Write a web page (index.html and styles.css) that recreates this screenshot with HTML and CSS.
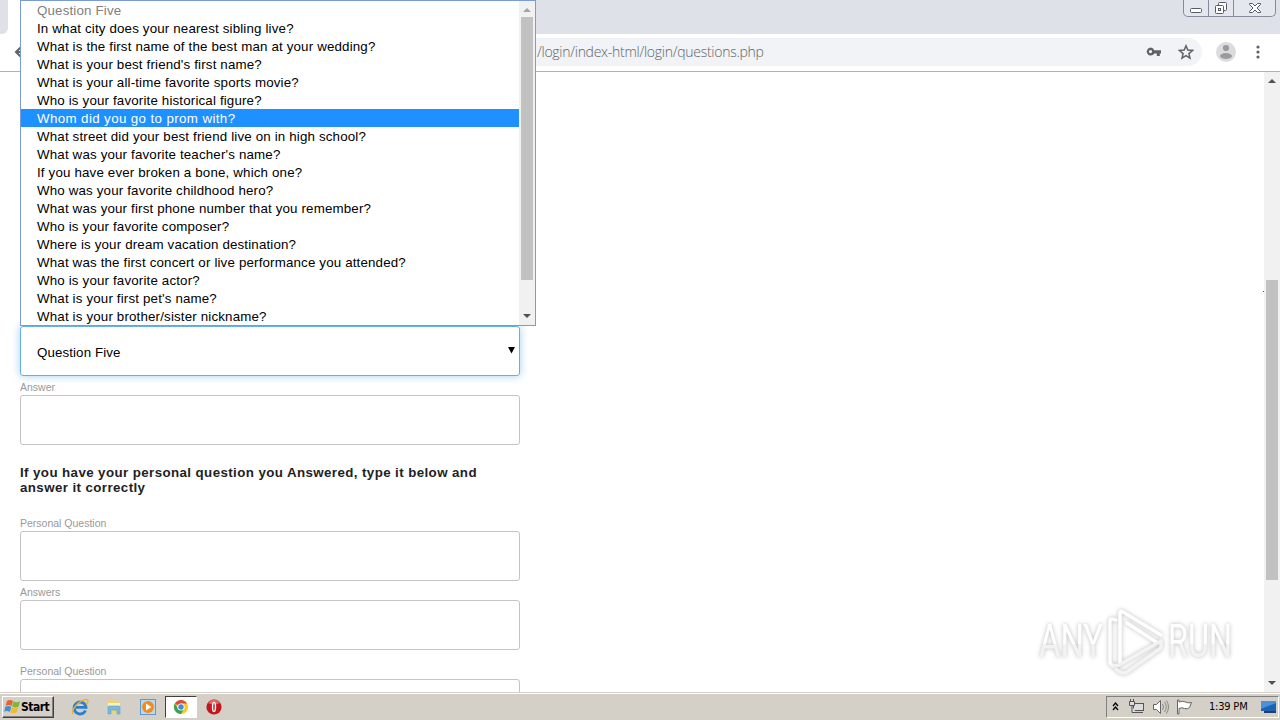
FILE: index.html
```html
<!DOCTYPE html>
<html lang="en">
<head>
    <meta charset="utf-8">
    <title>Security Questions</title>
    <link rel="stylesheet" href="styles.css">
</head>
<body>
    <!-- Browser window -->
    <div class="tabstrip">
        <div class="tab-edge"></div>
        <div class="active-tab"></div>
        <div class="window-buttons">
            <span class="win-btn min"><svg width="14" height="14" viewBox="0 0 14 14"><rect x="1.500" y="7.500" width="11" height="4" rx="1" fill="#fff" stroke="#555b68"/></svg></span>
            <span class="win-btn max"><svg width="14" height="14" viewBox="0 0 14 14" fill="#fff" stroke="#555b68"><rect x="4.500" y="1.500" width="8" height="8" rx="1"/><rect x="1.500" y="4.500" width="8" height="8" rx="1"/><rect x="4.500" y="7.500" width="2" height="2"/></svg></span>
            <span class="win-btn close"><svg width="14" height="14" viewBox="0 0 14 14"><path d="M1.500 2.500h3L7 5l2.500-2.500h3v1L9 7l3.500 3.500v1h-3L7 9l-2.500 2.500h-3v-1L5 7 1.500 3.500z" fill="#fff" stroke="#555b68"/></svg></span>
        </div>
    </div>
    <div class="toolbar">
        <svg class="back" width="16" height="16" viewBox="0 0 16 16" fill="none" stroke="#5f6368" stroke-width="2"><path d="M15 8H2M8 2L2 8l6 6"/></svg>
        <div class="address">
            <span class="url">/login/index-html/login/questions.php</span>
            <svg class="key" width="16" height="10" viewBox="0 0 16 10"><path fill="#5f6368" fill-rule="evenodd" d="M4.500.500a4 4 0 0 1 3.800 2.700H15v3.200h-1.200V9h-3V6.400H8.300A4 4 0 1 1 4.500.500zm0 2.500a1.600 1.600 0 1 0 0 3.200 1.600 1.600 0 0 0 0-3.200z"/></svg>
            <svg class="star" width="16" height="16" viewBox="0 0 16 16"><path d="M8 1.800l1.800 4.300 4.700.4-3.600 3.100 1.100 4.500L8 11.700l-4 2.400 1.100-4.500-3.600-3.100 4.700-.4z" fill="none" stroke="#5f6368" stroke-width="1.500"/></svg>
        </div>
        <svg class="avatar" width="20" height="20" viewBox="0 0 20 20"><circle cx="10" cy="10" r="10" fill="#dcdcde"/><circle cx="10" cy="6" r="3.100" fill="#9b9b9d"/><ellipse cx="10" cy="14" rx="6" ry="3" fill="#9b9b9d"/></svg>
        <svg class="dots" width="4" height="14" viewBox="0 0 4 14" fill="#5f6368"><circle cx="2" cy="2" r="1.600"/><circle cx="2" cy="7" r="1.600"/><circle cx="2" cy="12" r="1.600"/></svg>
    </div>

    <div class="viewport">
        <form class="questions">
            <div class="select-box">
                <span>Question Five</span>
                <svg width="8" height="7" viewBox="0 0 8 7"><path d="M1 0h7L4.500 6.500z"/></svg>
            </div>
            <label for="answer5">Answer</label>
            <input type="text" id="answer5">
            <h4>If you have your personal question you Answered, type it below and answer it correctly</h4>
            <label for="personal1">Personal Question</label>
            <input type="text" id="personal1">
            <label for="answer6">Answers</label>
            <input type="text" id="answer6">
            <label for="personal2" class="next">Personal Question</label>
            <input type="text" id="personal2">
        </form>
        <div class="speck"></div>
        <svg class="watermark" width="220" height="76" viewBox="0 0 220 76">
            <defs>
                <linearGradient id="fade" x1="0" y1="0" x2="0" y2="1">
                    <stop offset="55%" stop-color="#fff"/>
                    <stop offset="56%" stop-color="#f3f3f3"/>
                </linearGradient>
            </defs>
            <text x="9" y="53" textLength="64" lengthAdjust="spacingAndGlyphs">ANY</text>
            <text x="138" y="53" textLength="64" lengthAdjust="spacingAndGlyphs">RUN</text>
            <g fill="none" stroke-width="3.500" stroke-linecap="round" stroke-linejoin="round">
                <path d="M86 16l-4-1q-2 0-2 2v42l3 3" stroke="#fdfdfd"/>
                <path d="M90 59V9q0-3 3-1l38 23" stroke="#fff"/>
                <path d="M97 19l29 19" stroke="#fff"/>
                <path d="M83 62l6-1 42-24" stroke="#f3f3f3"/>
                <path d="M86 65q6 6 11 3l34-24V37" stroke="#f3f3f3"/>
            </g>
        </svg>
        <div class="scrollbar">
            <svg width="8" height="4" viewBox="0 0 8 4"><path d="M0 4l4-4 4 4z" fill="#505050"/></svg>
            <div class="thumb"></div>
            <svg width="8" height="4" viewBox="0 0 8 4"><path d="M0 0h8L4 4z" fill="#505050"/></svg>
        </div>
    </div>

    <!-- Open question list -->
    <div class="dropdown">
        <ul>
            <li class="disabled">Question Five</li>
            <li>In what city does your nearest sibling live?</li>
            <li>What is the first name of the best man at your wedding?</li>
            <li>What is your best friend's first name?</li>
            <li>What is your all-time favorite sports movie?</li>
            <li>Who is your favorite historical figure?</li>
            <li class="selected">Whom did you go to prom with?</li>
            <li>What street did your best friend live on in high school?</li>
            <li>What was your favorite teacher's name?</li>
            <li>If you have ever broken a bone, which one?</li>
            <li>Who was your favorite childhood hero?</li>
            <li>What was your first phone number that you remember?</li>
            <li>Who is your favorite composer?</li>
            <li>Where is your dream vacation destination?</li>
            <li>What was the first concert or live performance you attended?</li>
            <li>Who is your favorite actor?</li>
            <li>What is your first pet's name?</li>
            <li>What is your brother/sister nickname?</li>
        </ul>
        <div class="list-scroll">
            <svg width="8" height="4" viewBox="0 0 8 4"><path d="M0 4l4-4 4 4z" fill="#a3a3a3"/></svg>
            <div class="thumb"></div>
            <svg width="8" height="4" viewBox="0 0 8 4"><path d="M0 0h8L4 4z" fill="#505050"/></svg>
        </div>
    </div>

    <!-- Taskbar -->
    <div class="taskbar">
        <div class="start">
            <svg width="17" height="16" viewBox="0 0 17 16">
                <path d="M3 2q3-2 6 0L7.500 7q-3-2-6 0z" fill="#e8622c"/>
                <path d="M9.500 2.300q3 2 6.500 0L14.700 7.500q-3 2-6.500 0z" fill="#7db83a"/>
                <path d="M1.200 8q3-2 6 0l-1.500 5q-3-2-5.500 0z" fill="#3f8fd6"/>
                <path d="M7.800 8.300q3 2 6.500 0l-1.500 5q-3 2-6.500 0z" fill="#f4b92c"/>
            </svg>
            <span>Start</span>
        </div>
        <div class="app"><svg width="18" height="18" viewBox="0 0 18 18"><path d="M14.500 12.500A6 6 0 1 1 15 9.300H4.500" fill="none" stroke="#2b7fd0" stroke-width="2.800"/><path d="M2 16C-1 12 9 2 15 1.500c3 0 2 3 .5 5" fill="none" stroke="#e9b52f" stroke-width="1.400"/></svg></div>
        <div class="app"><svg width="18" height="18" viewBox="0 0 18 18"><path d="M2 4l1-2h5l1 2h6v11H2z" fill="#efd373"/><path d="M3 5h12v4H3z" fill="#fbf0b8"/><path d="M3 16V9q0-1 1-1h10q1 0 1 1v7h-3v-4H6v4z" fill="#78b9df" stroke="#5f9fca" stroke-width=".6"/></svg></div>
        <div class="app"><svg width="18" height="18" viewBox="0 0 18 18"><rect x="1.500" y="1.500" width="15" height="15" fill="#b9d9f2" stroke="#5b9bd0"/><circle cx="9" cy="9" r="6" fill="#f38b1e"/><path d="M7 5.500v7L12.500 9z" fill="#fff"/></svg></div>
        <div class="app active"><svg width="16" height="16" viewBox="0 0 16 16"><circle cx="8" cy="8" r="7" fill="#f9c926"/><path d="M8 8L1.900 4.500A7 7 0 0 1 14 4.500H8z" fill="#dd4b3a"/><path d="M1.900 4.500A7 7 0 0 0 8 15l3-5.300-6 0z" fill="#35a454"/><circle cx="8" cy="8" r="3.600" fill="#fff"/><circle cx="8" cy="8" r="2.700" fill="#4687e8"/></svg></div>
        <div class="app"><svg width="18" height="18" viewBox="0 0 18 18"><circle cx="9" cy="9" r="7.600" fill="#c4161c"/><path d="M3 5a7 7 0 0 1 12 0q-6 3-12 0z" fill="#dd6663"/><ellipse cx="9" cy="9" rx="2.200" ry="5.200" fill="#fff"/><ellipse cx="9" cy="9" rx=".7" ry="4" fill="#b51218"/></svg></div>
        <div class="tray">
            <svg width="7" height="9" viewBox="0 0 7 9" fill="none" stroke="#000" stroke-width="1.300"><path d="M1 4l2.500-3L6 4M1 8l2.500-3L6 8"/></svg>
            <svg width="17" height="16" viewBox="0 0 17 16" fill="#ddd" stroke="#555"><rect x="5.500" y="4.500" width="10" height="7"/><path d="M6 13.500h9M1.500 2.500h5v4h-5zM2.500 0v2M5.500 0v2M4 7v6.500h4"/></svg>
            <svg width="17" height="16" viewBox="0 0 17 16" fill="none" stroke="#888"><path d="M1.500 5.500h3l4-4v13l-4-4h-3z" fill="#fff" stroke="#666"/><path d="M10.500 5q2 3 0 6M12.500 3q3.500 5 0 10M14.500 1.500q4 6.500 0 13"/></svg>
            <svg width="17" height="16" viewBox="0 0 17 16" fill="#fff" stroke="#666"><path d="M1.500 1v14h1.500V9.500q3-1.500 5.500 0 3 1 5-1l2-5q-3 1-6-.5-3-1.500-6.500 0V1z"/></svg>
            <span class="clock">1:39 PM</span>
            <svg class="desktop" width="16" height="14" viewBox="0 0 16 14"><path d="M0 1h15v10H0z" fill="#1d62b5"/><path d="M0 1h15v2L0 9z" fill="#4a91da"/><path d="M3 11h12v2H3z" fill="#243f66"/></svg>
        </div>
    </div>
</body>
</html>
```
FILE: styles.css
```css
* {
    box-sizing: border-box;
}
body {
    margin: 0;
    width: 1280px;
    height: 720px;
    overflow: hidden;
    display: flex;
    flex-direction: column;
    position: relative;
    background: #fff;
    font-family: "Liberation Sans", Arial, sans-serif;
    color: #000;
}
svg {
    display: block;
    flex: none;
}

/* browser */
.tabstrip {
    height: 34px;
    flex: none;
    display: flex;
    background: #dee1e8;
}
.tab-edge {
    z-index: 1;
    width: 8px;
    border-bottom-right-radius: 6px;
    background: #dee1e8;
}
.active-tab {
    width: 512px;
    margin-left: -8px;
    background: #fff;
}
.window-buttons {
    margin-left: auto;
    margin-right: 4px;
    width: 93px;
    height: 17px;
    display: flex;
    border: 1px solid #858b98;
    border-top: none;
    border-radius: 0 0 5px 5px;
    background: #e4e7ed;
}
.win-btn {
    display: flex;
    justify-content: center;
    align-items: center;
    width: 25px;
    border-right: 1px solid #858b98;
}
.win-btn.close {
    flex: 1;
    border: none;
}
.toolbar {
    height: 38px;
    flex: none;
    display: flex;
    align-items: center;
    padding: 0 20px 2px 14px;
    border-bottom: 1px solid #aeb1b5;
}
.address {
    width: 1062px;
    height: 28px;
    margin-left: 110px;
    display: flex;
    align-items: center;
    border-radius: 14px;
    background: #f1f3f6;
}
.url {
    margin-left: 397px;
    font-family: "Open Sans", sans-serif;
    font-size: 14px;
    font-weight: 300;
    letter-spacing: -.27px;
    color: #5f6368;
}
.key {
    margin-left: auto;
    margin-right: 16px;
}
.star {
    margin-right: 8px;
}
.avatar {
    margin-left: 14px;
}
.dots {
    margin-left: auto;
}
.viewport {
    flex: 1;
    min-height: 0;
    display: flex;
    position: relative;
    overflow: hidden;
}

/* form */
.questions {
    width: 520px;
    flex: none;
    padding: 254px 0 0 20px;
    display: flex;
    flex-direction: column;
}
.select-box {
    height: 50px;
    flex: none;
    display: flex;
    align-items: center;
    justify-content: space-between;
    padding: 2px 4px 0 16px;
    border: 1px solid #66afe9;
    border-radius: 3px;
    box-shadow: 0 0 8px rgba(102, 175, 233, .6);
    font-size: 13.33px;
    letter-spacing: .1px;
}
.select-box svg {
    margin-top: -3px;
}
.questions label {
    height: 19px;
    flex: none;
    padding-top: 4px;
    font-size: 10.5px;
    line-height: 15px;
    color: #999;
}
.questions label.next {
    height: 29px;
    padding-top: 14px;
}
.questions input {
    width: 500px;
    height: 50px;
    flex: none;
    margin: 0;
    border: 1px solid #c4c4c4;
    border-radius: 3px;
    background: #fff;
}
.questions h4 {
    height: 67px;
    flex: none;
    margin: 0;
    padding-top: 20px;
    font-size: 13.33px;
    line-height: 15px;
    letter-spacing: .4px;
    color: #222;
}
.speck {
    position: absolute;
    left: 1263px;
    top: 219px;
    width: 1px;
    height: 1px;
    background: #555;
}
.scrollbar {
    width: 16px;
    margin-left: auto;
    padding: 7px 0 7px;
    display: flex;
    flex-direction: column;
    align-items: center;
    background: #f1f1f1;
}
.scrollbar .thumb {
    width: 12px;
    height: 300px;
    margin: 197px 0 auto;
    background: #c1c1c1;
}
.watermark {
    position: absolute;
    left: 1030px;
    top: 532px;
    filter: drop-shadow(0 0 2px rgba(0, 0, 0, .27));
}
.watermark text {
    font-family: Roboto, sans-serif;
    font-size: 46px;
    font-weight: 400;
    fill: url(#fade);
}

/* open list */
.dropdown {
    position: absolute;
    left: 20px;
    top: 0;
    width: 516px;
    height: 326px;
    display: flex;
    border: 1px solid #7a9cd3;
    background: #fff;
}
.dropdown ul {
    width: 498px;
    margin: 0;
    padding: 0;
    list-style: none;
}
.dropdown li {
    height: 18px;
    padding: 1px 0 0 16px;
    font-size: 13.33px;
    line-height: 18px;
    letter-spacing: .16px;
    white-space: nowrap;
}
.dropdown .disabled {
    color: #808080;
}
.dropdown .selected {
    background: #1e90ff;
    color: #fff;
    letter-spacing: .38px;
}
.list-scroll {
    flex: 1;
    display: flex;
    flex-direction: column;
    align-items: center;
    padding: 7px 0;
    background: #f1f1f1;
}
.list-scroll .thumb {
    width: 12px;
    height: 263px;
    margin: 5px 0 auto;
    background: #c1c1c1;
}

/* taskbar */
.taskbar {
    height: 28px;
    flex: none;
    display: flex;
    align-items: center;
    padding: 0 0 0 2px;
    border-top: 1px solid #d4d0c8;
    box-shadow: inset 0 1px #fff;
    background: #d4d0c8;
}
.start {
    width: 52px;
    height: 22px;
    margin-right: 9px;
    display: flex;
    align-items: center;
    border: 1px solid;
    border-color: #fff #404040 #404040 #fff;
    box-shadow: inset -1px -1px #808080;
    font: bold 12px "DejaVu Sans Condensed", "DejaVu Sans", sans-serif;
    letter-spacing: -.5px;
    padding-left: 1px;
}
.app {
    width: 34px;
    height: 22px;
    display: flex;
    align-items: center;
    justify-content: center;
}
.app.active {
    width: 32px;
    margin: 0 0 0 1px;
    border: 1px solid;
    border-color: #404040 #fff #fff #404040;
    background: #fff;
}
.app:nth-child(4) {
    width: 33px;
}
.tray {
    width: 173px;
    height: 22px;
    margin-left: auto;
    margin-right: 1px;
    padding-left: 5px;
    display: flex;
    align-items: center;
    border: 1px solid;
    border-color: #808080 #fff #fff #808080;
}
.tray svg {
    margin-right: 7px;
}
.tray svg:first-child {
    margin-right: 9px;
}
.clock {
    width: 40px;
    margin-left: 9px;
    font: 11px "DejaVu Sans Condensed", "DejaVu Sans", sans-serif;
    letter-spacing: -.2px;
    white-space: nowrap;
}
.tray .desktop {
    margin: 0 1px 0 auto;
}
```
